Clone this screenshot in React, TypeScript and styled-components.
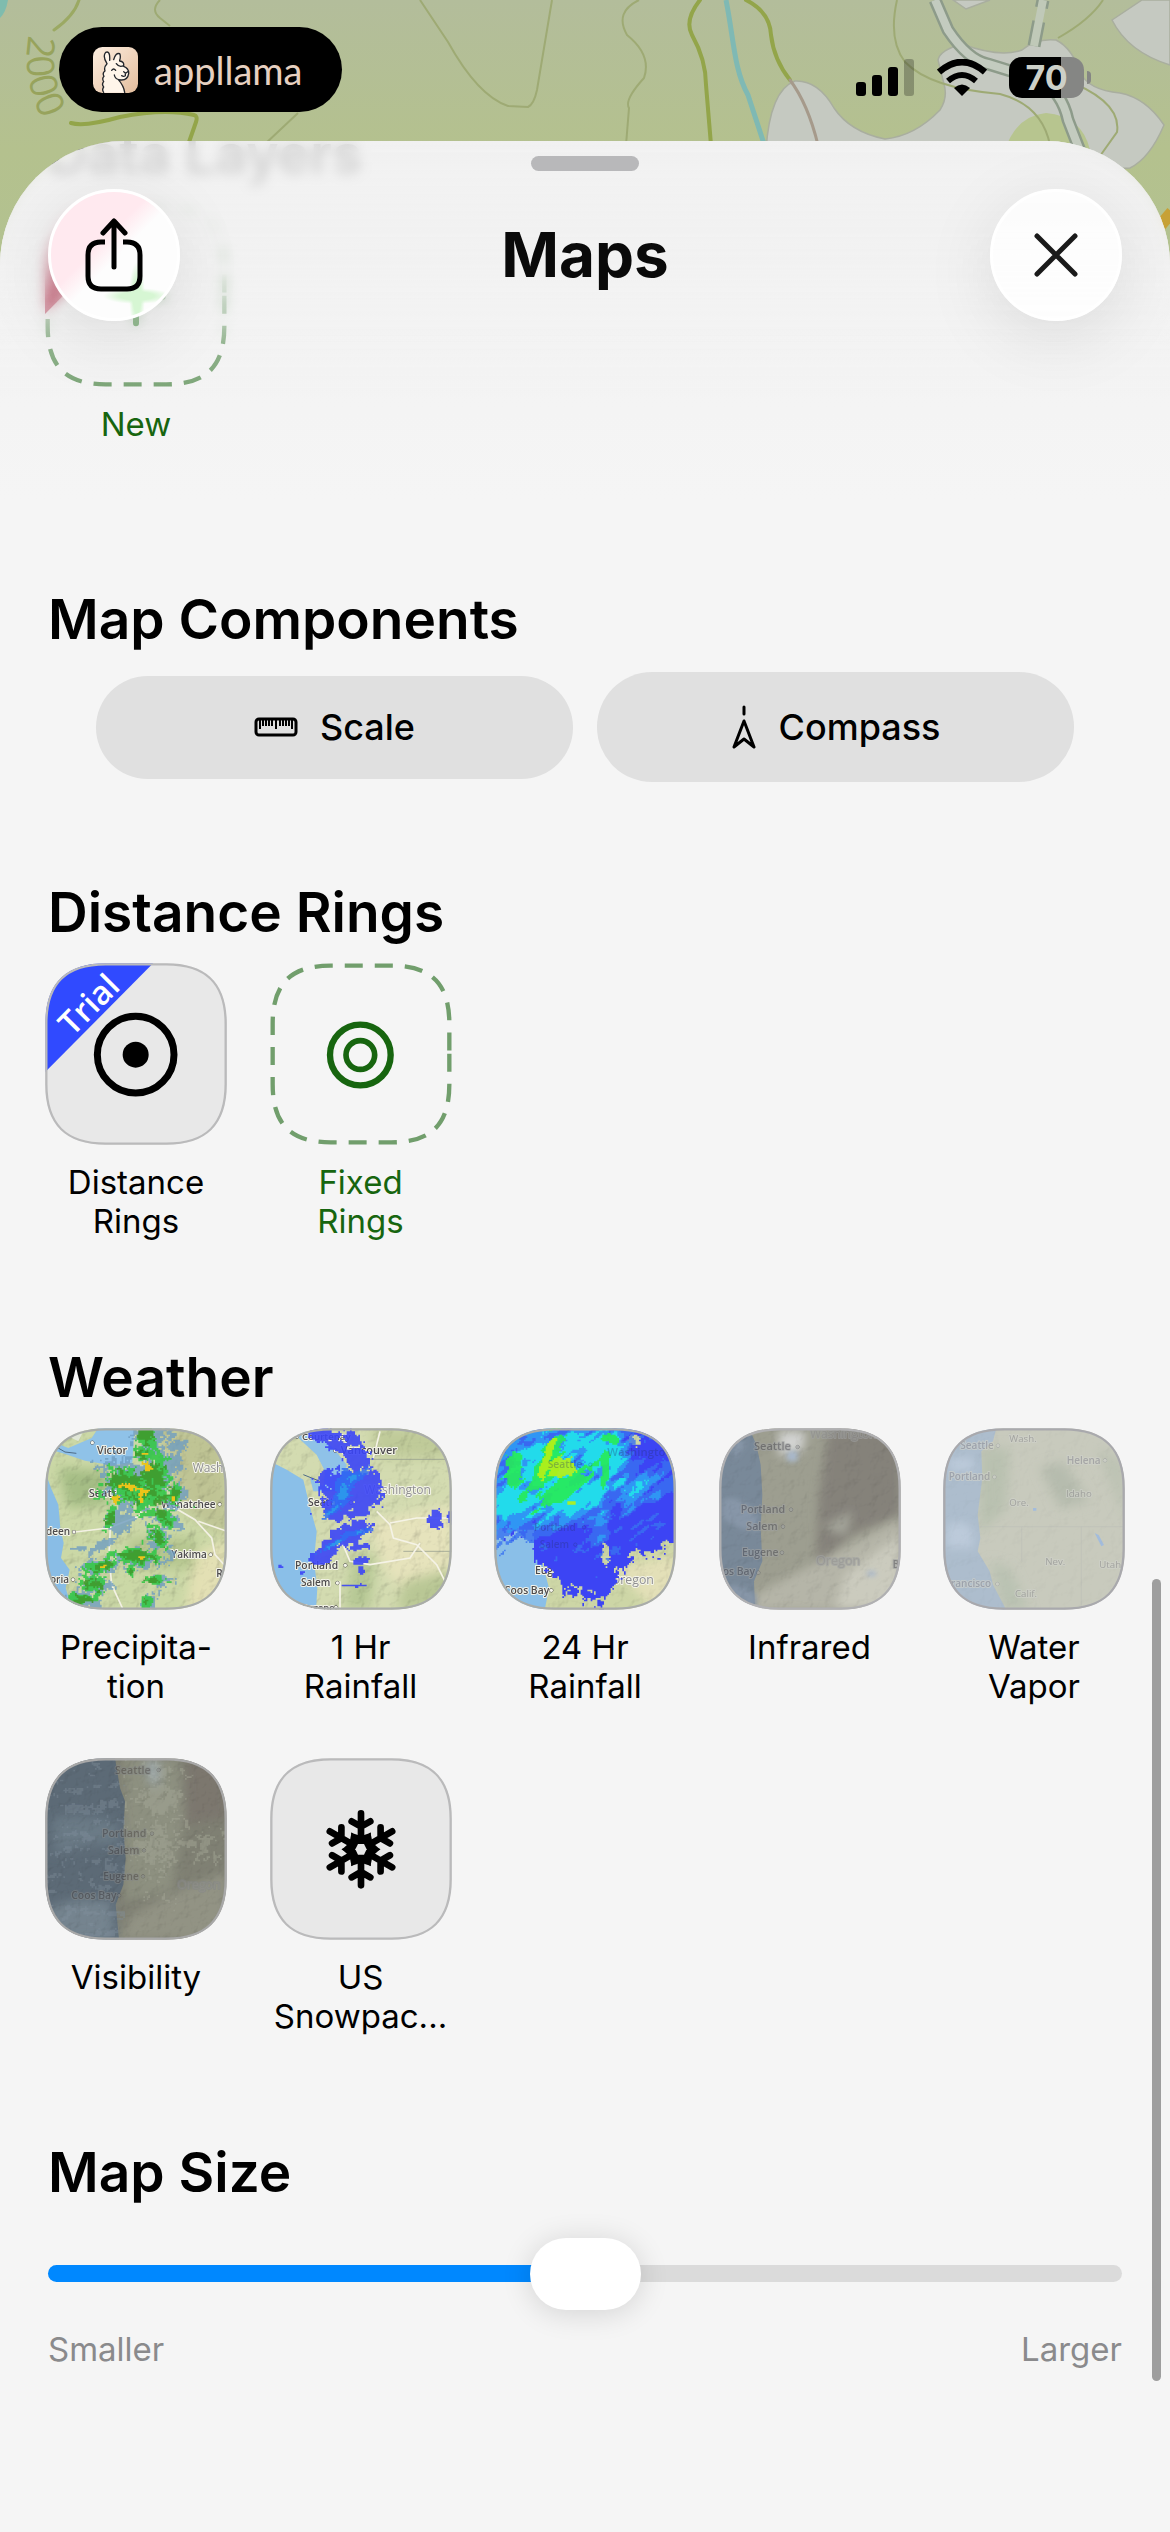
import React, { useId, useState } from "react";
import styled, { createGlobalStyle } from "styled-components";

/* ---------- theme values ---------- */

const font = 'Inter, "Liberation Sans", sans-serif';
const mapFont = '"Open Sans", "Noto Sans", sans-serif';
const green = "#17650f";

/* ---------- layout ---------- */

const GlobalStyle = createGlobalStyle`
  * { box-sizing: border-box; }
  body { margin: 0; background: #f5f5f5; font-family: ${font}; color: #000; }
  button { font: inherit; color: inherit; border: 0; padding: 0; background: none; cursor: pointer; }
  h1, h2, p { margin: 0; }
`;

const Page = styled.div`
  position: relative;
  display: flex;
  flex-direction: column;
  min-height: 100vh;
  overflow: hidden;
`;

const Backdrop = styled.svg`
  position: absolute;
  top: 0;
  left: 0;
  width: 100%;
  height: 300px;
`;

const StatusBar = styled.div`
  position: relative;
  display: flex;
  justify-content: space-between;
  align-items: flex-start;
  height: 141px;
  padding: 27px 79px 0 59px;
`;

const BrandPill = styled.div`
  display: flex;
  align-items: center;
  gap: 16px;
  height: 85px;
  min-width: 283px;
  padding: 0 34px;
  border-radius: 43px;
  background: #000;
  color: #e6d0c0;
  font-family: Lato, ${font};
  font-size: 38px;
  line-height: 40px;
`;

const StatusIcons = styled.div`
  display: flex;
  align-items: center;
  gap: 22px;
  height: 41px;
  margin-top: 30px;
`;

const Battery = styled.div`
  display: flex;
  align-items: center;
  gap: 3px;
`;

const BatteryBody = styled.div`
  width: 75px;
  height: 41px;
  border-radius: 13px;
  background: linear-gradient(90deg, #000 70%, #858684 70%);
  color: #cdd0c8;
  font-size: 34px;
  font-weight: 700;
  line-height: 41px;
  text-align: center;
`;

const BatteryNub = styled.div`
  width: 4px;
  height: 13px;
  border-radius: 0 4px 4px 0;
  background: #858684;
`;

const Sheet = styled.main`
  position: relative;
  flex: 1;
  overflow: hidden;
  border-radius: 124px 124px 0 0;
  background: linear-gradient(#f1f1f1, #f5f5f5 360px);
`;

const Header = styled.header`
  position: absolute;
  top: 0;
  left: 0;
  right: 0;
  display: flex;
  justify-content: space-between;
  align-items: center;
  padding: 48px 48px 78px;

  &::before, &::after {
    content: "";
    position: absolute;
    inset: 0;
    z-index: -1;
  }
  &::before {
    backdrop-filter: blur(6px);
    mask-image: linear-gradient(#000 50%, transparent 80%);
  }
  &::after {
    background: linear-gradient(rgba(241, 241, 241, 0.86), rgba(241, 241, 241, 0.9) 35%, rgba(243, 243, 243, 0.4) 62%, rgba(244, 244, 244, 0.1) 95%, rgba(244, 244, 244, 0));
  }
  z-index: 1;
`;

const Grabber = styled.div`
  position: absolute;
  top: 15px;
  left: 50%;
  width: 108px;
  height: 15px;
  margin-left: -54px;
  border-radius: 8px;
  background: #b8b8ba;
`;

const Title = styled.h1`
  font-size: 62px;
  font-weight: 700;
  line-height: 76px;
  color: #0a0a0a;
`;

const RoundButton = styled.button<{ $tinted?: boolean }>`
  display: grid;
  place-items: center;
  width: 132px;
  height: 132px;
  border: 3px solid #fff;
  border-radius: 50%;
  background: ${(p) =>
    p.$tinted
      ? `radial-gradient(ellipse 34px 8px at 86px 104px, #d6f6d3 50%, transparent),
         radial-gradient(ellipse 8px 34px at 86px 104px, #d6f6d3 50%, transparent),
         linear-gradient(135deg, #ffe9ef 40%, #fdfdfd 52%)`
      : "rgba(254, 254, 254, 0.9)"};
  box-shadow: 0 16px 70px rgba(0, 0, 0, 0.1);
`;

const Scroller = styled.div`
  display: flex;
  flex-direction: column;
  gap: 96px;
  margin-top: -21px;
  padding: 0 45px 96px;
`;

const Section = styled.section`
  display: flex;
  flex-direction: column;
  gap: 17px;
`;

const Heading = styled.h2`
  padding-left: 3px;
  font-size: 55px;
  font-weight: 600;
  line-height: 68px;
`;

const TileGrid = styled.div`
  display: grid;
  grid-template-columns: repeat(auto-fill, 182px);
  justify-content: space-between;
  gap: 52px 40px;
  padding-bottom: 6px;
`;

const TileButton = styled.button<{ $accent?: boolean }>`
  display: flex;
  flex-direction: column;
  align-items: center;
  justify-content: flex-start;
  gap: 18px;
  color: ${(p) => (p.$accent ? green : "#000")};
`;

const TileLabel = styled.span`
  min-height: 78px;
  font-size: 33px;
  line-height: 39px;
  text-align: center;
  white-space: pre-line;
`;

const TileArt = styled.svg`
  display: block;
  width: 182px;
  height: 182px;
`;

const ChipRow = styled.div`
  display: flex;
  align-items: center;
  gap: 24px;
  padding: 2px 51px 0;
`;

const Chip = styled.button`
  flex: 1;
  display: flex;
  align-items: center;
  justify-content: center;
  gap: 22px;
  padding: 33px;
  border-radius: 55px;
  background: #e0e0e0;
  font-size: 36px;
  font-weight: 500;
  line-height: 37px;
`;

const SliderBlock = styled.div`
  display: flex;
  flex-direction: column;
  gap: 7px;
  padding: 0 3px;
`;

const Slider = styled.input`
  appearance: none;
  width: 100%;
  height: 100px;
  margin: 0;
  background: transparent;

  &::-webkit-slider-runnable-track {
    height: 17px;
    border-radius: 9px;
    background: linear-gradient(90deg, #0088ff var(--fill), #dbdbdb var(--fill));
  }
  &::-webkit-slider-thumb {
    appearance: none;
    width: 111px;
    height: 72px;
    margin-top: -27px;
    border-radius: 36px;
    background: #fff;
    box-shadow: 0 3px 30px rgba(0, 0, 0, 0.14);
  }
`;

const SliderEnds = styled.div`
  display: flex;
  justify-content: space-between;
  color: #8a8a8c;
  font-size: 33px;
  line-height: 39px;
`;

const ScrollIndicator = styled.div`
  position: absolute;
  top: 1438px;
  right: 9px;
  width: 9px;
  height: 802px;
  border-radius: 5px;
  background: #9e9e9e;
`;

/* ---------- noise helpers for the radar pictures ---------- */

const hash = (x: number, y: number, s: number) => {
  const n = Math.sin(x * 127.1 + y * 311.7 + s * 74.7) * 43758.5453;
  return n - Math.floor(n);
};

const valueNoise = (x: number, y: number, s: number) => {
  const xi = Math.floor(x);
  const yi = Math.floor(y);
  const u = x - xi;
  const v = y - yi;
  const a = u * u * (3 - 2 * u);
  const b = v * v * (3 - 2 * v);
  const top = hash(xi, yi, s) * (1 - a) + hash(xi + 1, yi, s) * a;
  const low = hash(xi, yi + 1, s) * (1 - a) + hash(xi + 1, yi + 1, s) * a;
  return top * (1 - b) + low * b;
};

const fbm = (x: number, y: number, s: number) =>
  valueNoise(x / 38, y / 38, s) * 0.28 +
  valueNoise(x / 17, y / 17, s + 1) * 0.34 +
  valueNoise(x / 6, y / 6, s + 2) * 0.38;

type Blob = [cx: number, cy: number, rx: number, ry: number, angle?: number];

const blobField = (blobs: Blob[]) => (x: number, y: number) => {
  let best = 0;
  for (const [cx, cy, rx, ry, angle = 0] of blobs) {
    const t = (angle * Math.PI) / 180;
    const dx = x - cx;
    const dy = y - cy;
    const px = (dx * Math.cos(t) + dy * Math.sin(t)) / rx;
    const py = (-dx * Math.sin(t) + dy * Math.cos(t)) / ry;
    best = Math.max(best, Math.exp(-(px * px + py * py) * 0.7));
  }
  return best;
};

/* Path of all square cells in which field plus noise passes the level. */
const cells = (
  field: (x: number, y: number) => number,
  level: number,
  seed: number,
  amount = 1,
  size = 5
) => {
  let d = "";
  for (let y = 0; y < 546; y += size) {
    let start = -1;
    for (let x = 0; x <= 546 + size; x += size) {
      const on = x < 546 && field(x, y) + (fbm(x, y, seed) - 0.5) * amount > level;
      if (on && start < 0) start = x;
      if (!on && start >= 0) {
        d += `M${start} ${y}H${x}v${size}H${start}z`;
        start = -1;
      }
    }
  }
  return d;
};

const rainGreen = blobField([
  [300, 25, 34, 50], [305, 75, 38, 30], [235, 165, 60, 52], [325, 135, 44, 62], [285, 205, 100, 40],
  [388, 195, 26, 32], [355, 268, 40, 22, 45], [195, 265, 18, 42, 20], [335, 325, 42, 28, 40],
  [272, 382, 66, 26], [165, 415, 50, 18, -15], [140, 468, 42, 30], [105, 512, 44, 24],
  [330, 455, 42, 12], [303, 520, 16, 24], [255, 425, 14, 24],
]);
const rainHaze = blobField([
  [320, 35, 60, 64], [240, 160, 80, 70], [340, 140, 66, 84], [400, 55, 34, 24], [225, 275, 48, 40],
  [390, 200, 38, 52], [360, 275, 56, 34, 45], [340, 330, 54, 40, 40], [275, 385, 82, 38],
  [165, 415, 66, 28, -15], [170, 350, 56, 14, -30], [145, 470, 54, 40], [110, 514, 60, 32], [330, 456, 60, 20], [303, 520, 26, 32],
  [100, 360, 26, 6], [380, 100, 44, 34],
]);
const rainHeavy = blobField([
  [300, 118, 24, 20], [262, 180, 50, 16, 15], [214, 208, 14, 24, 30], [283, 200, 12, 24],
  [288, 386, 10, 10], [380, 208, 8, 16], [170, 415, 20, 5, -20], [300, 75, 14, 5],
]);

const hourRain = blobField([
  [150, 18, 40, 22], [245, 32, 40, 26, 20], [200, 50, 30, 20], [258, 95, 40, 40], [225, 160, 72, 44], [215, 195, 60, 50],
  [300, 165, 32, 50], [195, 245, 40, 26], [285, 215, 56, 34, -40], [270, 245, 40, 18, -30],
  [235, 315, 70, 28, -22], [262, 290, 34, 24], [170, 358, 56, 22, -38],
  [150, 392, 28, 16], [262, 357, 28, 8, -10], [270, 396, 26, 12, -10], [272, 425, 8, 14], [492, 275, 20, 26],
  [542, 262, 12, 18], [30, 412, 6, 5], [92, 432, 10, 5], [255, 470, 30, 4],
]);
const hourCore = blobField([
  [218, 180, 26, 60, 20], [250, 145, 44, 14, -35], [190, 240, 40, 10, -40], [255, 312, 44, 8, -10],
  [190, 345, 44, 8, -30],
]);

const dayEdge: [number, number][] = [
  [0, 290], [60, 318], [115, 325], [116, 400], [150, 420], [190, 450], [240, 478], [290, 490], [325, 510],
  [345, 460], [372, 408], [430, 372], [470, 388], [546, 335],
];
const dayMask = (x: number, y: number) => {
  let i = 1;
  while (i < dayEdge.length - 1 && dayEdge[i][0] < x) i += 1;
  const [x0, y0] = dayEdge[i - 1];
  const [x1, y1] = dayEdge[i];
  const limit = y0 + ((x - x0) / (x1 - x0)) * (y1 - y0);
  const hole = Math.exp(-(((x - 332) / 12) ** 2) - ((y - 378) / 30) ** 2);
  const corner = x + y < 90 ? 0.8 : 0;
  const dry = Math.exp(-(((x - 420) / 26) ** 2) - ((y - 30) / 26) ** 2) * 0.9;
  const spots = y > limit && x > 200 && x < 420 ? 0.2 : 0;
  return Math.min((limit - y) / 90, 0.5) + 0.5 - hole * 1.3 - corner - dry + spots;
};
const streak = (x: number, y: number) =>
  (valueNoise((x - y) / 70 + 20, (y + x * 0.8) / 15 + 50, 9) - 0.5) * 0.5;
const bump = (x: number, y: number, cx: number, cy: number, rx: number, ry: number) =>
  Math.exp(-(((x - cx) / rx) ** 2) - ((y - cy) / ry) ** 2);
const dayCloud = blobField([
  [160, 120, 150, 130, -40], [70, 220, 130, 70, -30], [310, 70, 80, 90], [230, 210, 140, 60, -30],
]);
const dayHeat = (x: number, y: number) =>
  dayCloud(x, y) + streak(x, y) + 0.34 * bump(x, y, 410, 190, 60, 70) + 0.4 * bump(x, y, 318, 290, 26, 70) +
  0.34 * bump(x, y, 490, 170, 120, 80) + 0.26 * bump(x, y, 290, 350, 60, 60) + 0.2 * bump(x, y, 430, 300, 80, 50);
const dayRain = blobField([
  [165, 90, 34, 120, 18], [215, 175, 110, 34, -35], [120, 170, 60, 24, -40], [345, 30, 30, 18, 20],
  [330, 120, 14, 60], [60, 120, 30, 50],
]);
const dayWarm = (x: number, y: number) => dayRain(x, y) + streak(x, y);
const dayPeak = blobField([[200, 115, 60, 36, 10], [160, 80, 16, 100, 18], [228, 222, 20, 6]]);
const dayHot = (x: number, y: number) => dayPeak(x, y) + streak(x, y) * 0.8;

const paths = {
  haze: cells(rainHaze, 0.64, 3, 1.5),
  green: cells(rainGreen, 0.6, 7, 1.5),
  deep: cells(rainGreen, 0.84, 11, 1.3),
  heavy: cells(rainHeavy, 0.72, 15, 1.4),
  hour: cells(hourRain, 0.5, 21, 1.1),
  hourMid: cells(hourCore, 0.5, 24, 0.9),
  hourCore: cells(hourCore, 0.85, 25, 0.8),
  day: cells(dayMask, 0.5, 31, 1.1),
  dayA: cells(dayHeat, 0.32, 33, 0.4),
  dayB: cells(dayHeat, 0.54, 34, 0.4),
  dayC: cells(dayHeat, 0.74, 35, 0.4),
  dayD: cells(dayWarm, 0.6, 36, 0.5),
  dayE: cells(dayHot, 0.68, 37, 0.5),
  swell: cells((x, y) => valueNoise((x + y) / 60, y / 16, 5) * 0.6 + (x < 240 ? 0 : -2), 0.45, 41, 1),
  scrub: cells((x, y) => Math.max(bump(x, y, 330, 180, 110, 230), 0.9 * bump(x, y, 480, 260, 70, 80)) * 0.6, 0.5, 43, 1.2),
};

/* ---------- tile art ---------- */

/* Continuous-corner square, walked clockwise from the middle of the right side. */
const squircle = (inset: number) => {
  const a = inset;
  const b = 546 - inset;
  const k = 62;
  const e = 182;
  return `M${b} 272V${546 - e}C${b} ${546 - k} ${546 - k} ${b} ${546 - e} ${b}H${e}C${k} ${b} ${a} ${546 - k} ${a} ${546 - e}V${e}C${a} ${k} ${k} ${a} ${e} ${a}H${546 - e}C${546 - k} ${a} ${b} ${k} ${b} ${e}z`;
};

function Framed({ children, edge = "#bababb" }: { children: React.ReactNode; edge?: string }) {
  const id = useId();
  return (
    <TileArt viewBox="0 0 546 546" aria-hidden="true">
      <clipPath id={id}>
        <path d={squircle(1)} />
      </clipPath>
      <g clipPath={`url(#${id})`}>{children}</g>
      <path d={squircle(4)} fill="none" stroke={edge} strokeWidth="7" />
    </TileArt>
  );
}

function Dashed({ children }: { children: React.ReactNode }) {
  return (
    <TileArt viewBox="0 0 546 546" aria-hidden="true">
      <path d={squircle(8)} fill="none" stroke="#719e6c" strokeWidth="13" strokeDasharray="54 36" />
      {children}
    </TileArt>
  );
}

type Place = [text: string, x: number, y: number, size: number, dotX?: number, dotY?: number];

function Places({ items, ink, halo, opacity = 1, light = [] }: {
  items: Place[]; ink: string; halo: string; opacity?: number; light?: string[];
}) {
  return (
    <g opacity={opacity} fontFamily={mapFont} fontWeight="600" paintOrder="stroke" strokeLinejoin="round">
      {items.map(([text, x, y, size, dx, dy]) => (
        <g key={text}>
          <text x={x} y={y} fontSize={size} fontWeight={light.includes(text) ? 400 : 600}
            fill={light.includes(text) ? "#8f8f90" : ink} stroke={halo} strokeWidth="6">
            {text}
          </text>
          {dx !== undefined && <circle cx={dx} cy={dy} r="5" fill={halo} stroke={ink} strokeWidth="3" />}
        </g>
      ))}
    </g>
  );
}

function Relief({ strength = 0.5, frequency = 0.025 }: { strength?: number; frequency?: number }) {
  const id = useId();
  return (
    <>
      <filter id={id} x="0" y="0" width="100%" height="100%">
        <feTurbulence type="fractalNoise" baseFrequency={frequency} numOctaves={4} seed={4} />
        <feDiffuseLighting surfaceScale="9" diffuseConstant="1.3" lightingColor="#fff">
          <feDistantLight azimuth={225} elevation={50} />
        </feDiffuseLighting>
      </filter>
      <rect width="546" height="546" filter={`url(#${id})`} opacity={strength} style={{ mixBlendMode: "multiply" }} />
    </>
  );
}

function Soft({ by, children }: { by: number; children: React.ReactNode }) {
  const id = useId();
  return (
    <>
      <filter id={id} x="-30%" y="-30%" width="160%" height="160%">
        <feGaussianBlur stdDeviation={by} />
      </filter>
      <g filter={`url(#${id})`}>{children}</g>
    </>
  );
}

const NewLayerArt = () => (
  <TileArt viewBox="0 0 546 546" aria-hidden="true">
    <path d={squircle(8)} fill="none" stroke="#719e6c" strokeWidth="13" strokeDasharray="54 36" />
    <path d="M0 182C0 62 62 0 182 0H323L0 327z" fill="#b0213f" />
    <path d="M273 195v160M193 275h160" stroke="#3f8a3a" strokeWidth="18" strokeLinecap="round" />
  </TileArt>
);

const DistanceArt = () => (
  <Framed>
    <rect width="546" height="546" fill="#e8e8e8" />
    <circle cx="272" cy="275" r="115" fill="none" stroke="#000" strokeWidth="21" />
    <circle cx="272" cy="275" r="39" />
    <path d="M0 0H325L0 328z" fill="#304aff" />
    <text transform="translate(156 149) rotate(-45)" textAnchor="middle" fill="#fff" fontFamily={mapFont} fontSize="98" fontWeight="600">
      Trial
    </text>
  </Framed>
);

const FixedArt = () => (
  <Dashed>
    <circle cx="271" cy="276" r="91" fill="none" stroke={green} strokeWidth="19" />
    <circle cx="271" cy="276" r="43" fill="none" stroke={green} strokeWidth="17" />
  </Dashed>
);

const PrecipitationArt = () => (
  <Framed edge="#a9aca9">
    <rect width="546" height="546" fill="#cbd8a6" />
    <Soft by={16}>
      <path d="M420 546L450 380L546 330V546z" fill="#e3e0b4" />
      <path d="M330 0H546V330L420 250z" fill="#bfc494" />
      <path d="M40 120L200 130L190 230L70 240z" fill="#a5bd85" />
      <path d="M250 330h200v90H250z" fill="#b5c68f" />
    </Soft>
    <Relief strength={0.4} />
    <path d="M0 130L18 180L40 230L46 300L56 345L48 390L74 425L62 480L82 546H0z" fill="#89bde6" />
    <path d="M8 62L60 78L120 98L200 112L262 104L268 0H160L140 30L70 60L30 44z" fill="#8fc2e8" />
    <path d="M0 0H120L100 40L60 20L20 50L0 40z" fill="#dfe6d6" />
    <path d="M36 58L60 72L94 76" fill="none" stroke="#4e6b86" strokeWidth="3" />
    <g fill="none" stroke="#f3f1e4" strokeWidth="5">
      <path d="M90 312L190 300L290 262L280 230" />
      <path d="M196 300L192 380L200 470L235 546" />
      <path d="M390 240L450 275L500 330L510 380L546 420" />
      <path d="M460 280L546 310" />
    </g>
    <Places ink="#4c4a4c" halo="#f4f4ea" light={["Wash"]} items={[
      ["Victor", 156, 79, 32, 142, 44], ["Wash", 443, 131, 36], ["Seattle", 131, 208, 33],
      ["Wenatchee", 349, 240, 30, 524, 229], ["deen", 3, 321, 30, 87, 312], ["Yakima", 379, 390, 30, 497, 380],
      ["oria", 15, 464, 30, 84, 455], ["R", 514, 448, 30],
    ]} />
    <path d={paths.haze} fill="#6f9ec0" opacity=".8" />
    <path d={paths.green} fill="#38c84a" opacity=".92" />
    <path d={paths.deep} fill="#3f9a2e" opacity=".9" />
    <path d={paths.heavy} fill="#ecc419" />
  </Framed>
);

const HourArt = () => (
  <Framed edge="#a9aca9">
    <rect width="546" height="546" fill="#d3dbb0" />
    <Soft by={18}>
      <path d="M300 280L546 230V430L400 500L330 400z" fill="#e6e3bc" />
      <path d="M250 380h70l-20 166h-80z" fill="#b6c894" />
      <path d="M300 0H546V90H330z" fill="#bfca99" />
      <path d="M400 460L546 420V546H380z" fill="#b9c795" />
    </Soft>
    <Relief strength={0.36} />
    <path d="M0 100L50 125L100 155L118 230L140 310L132 400L142 480L138 546H0z" fill="#8abfe8" />
    <path d="M60 8L96 40L140 80L165 130L160 175L120 150L130 190L205 190L230 110L190 60L130 10z" fill="#8fc2e8" />
    <path d="M100 140L150 160" fill="none" stroke="#4e6b86" strokeWidth="3" />
    <path d="M285 94H546M400 370H546" fill="none" stroke="#8b9486" strokeWidth="2" />
    <g fill="none" stroke="#f5f3e6" strokeWidth="5">
      <path d="M320 250L360 290L370 330L440 350L500 410L530 470" />
      <path d="M215 340L240 400L300 410L420 390L450 345" />
      <path d="M360 285L440 270H546" />
      <path d="M210 460V546M330 10L310 90" />
    </g>
    <Places ink="#4c4a4c" halo="#f4f4ea" light={["Washington"]} items={[
      ["Courtenay", 96, 37, 29, 81, 26], ["Vancouver", 212, 79, 33, 196, 68], ["Washington", 283, 197, 36],
      ["Seattle", 114, 234, 31, 243, 224], ["Portland", 75, 424, 31, 226, 412], ["Salem", 93, 474, 30, 202, 465],
      ["Eugene", 95, 550, 28, 198, 538],
    ]} />
    <path d={paths.hour} fill="#3b45f6" opacity=".9" />
    <path d={paths.hourMid} fill="#2f6ff2" opacity=".85" />
    <path d={paths.hourCore} fill="#2ba0ea" opacity=".8" />
  </Framed>
);

const DayArt = () => (
  <Framed edge="#a9aca9">
    <rect width="546" height="546" fill="#cdd6a6" />
    <Soft by={14}>
      <path d="M360 420L546 380V546H480z" fill="#e3e0b8" />
    </Soft>
    <Relief strength={0.3} />
    <path d="M0 0H120L125 330L165 480L152 546H0z" fill="#8abfe8" />
    <path d="M480 546L510 480L546 470V546z" fill="#9fcbe2" />
    <Places ink="#4c4a4c" halo="#f4f4ea" light={["Oregon"]} items={[
      ["Oregon", 350, 467, 37], ["Coos Bay", 30, 498, 31, 172, 487], ["Eugene", 123, 437, 31, 240, 427],
    ]} />
    <path d={paths.day} fill="#3c44f4" />
    <Soft by={2}>
      <path d={paths.dayA} fill="#3a72f0" opacity=".8" />
      <path d={paths.dayB} fill="#2e9ff5" opacity=".85" />
      <path d={paths.dayC} fill="#22e2ea" opacity=".9" />
      <path d={paths.dayD} fill="#27ea58" opacity=".9" />
      <path d={paths.dayE} fill="#b8f014" opacity=".9" />
    </Soft>
    <Places opacity={0.3} ink="#23306a" halo="transparent" items={[
      ["Washington", 340, 84, 34], ["Seattle", 161, 119, 31, 289, 110], ["Portland", 120, 309, 30, 270, 298],
      ["Salem", 137, 361, 30, 244, 350],
    ]} />
  </Framed>
);

const InfraredArt = () => (
  <Framed edge="#b0b0b2">
    <rect width="546" height="546" fill="#9d9e90" />
    <Soft by={14}>
      <path d="M330 0H546V260L400 320L290 420L300 200z" fill="#85827a" />
      <path d="M110 500L300 400L546 270V546H90z" fill="#b5b5a8" />
      <path d="M380 440L546 320V546H350z" fill="#cbcbbe" />
      <path d="M180 10h80l-10 60l-70 15z" fill="#d2d3d1" />
      <path d="M310 300l90-50l-20 70z" fill="#a5a69b" />
    </Soft>
    <path d="M0 0H90L112 50L125 110L130 200L125 300L130 400L105 460L108 546H0z" fill="#798999" />
    <Soft by={8}>
      <path d="M10 220q30-30 100 30l10 60q-60 0-110-40zM30 470q40 0 80 30v40H40zM20 30q40-10 60 20l-30 40z" fill="#8796a8" />
      <path d="M445 430h25v14h-25z" fill="#a8b8cc" />
      <path d="M205 70h30v30h-30z" fill="#a8b8cc" />
    </Soft>
    <Relief strength={0.2} />
    <Places opacity={0.6} ink="#55555c" halo="#a0a2a2" light={["Washington", "Oregon"]} items={[
      ["Washington", 273, 30, 36], ["Seattle", 105, 67, 33, 236, 57], ["Portland", 65, 256, 32, 216, 245],
      ["Salem", 82, 307, 32, 192, 296], ["Eugene", 69, 384, 31, 189, 374], ["os Bay", 11, 442, 31, 118, 434],
      ["Oregon", 291, 412, 38], ["B", 521, 420, 30],
    ]} />
  </Framed>
);

const VaporArt = () => (
  <Framed edge="#a9a9ad">
    <rect width="546" height="546" fill="#c8cabd" />
    <Soft by={16}>
      <path d="M110 60h90l-10 180l-80 80z" fill="#b9c1b0" />
      <path d="M290 120l70-20l80 120l-90 20z" fill="#b6bcae" />
      <path d="M140 400l60 20l60 126h-80z" fill="#bac2b2" />
      <path d="M460 60l86 40v180z" fill="#bdc3b4" />
    </Soft>
    <path d="M0 0H160L150 40L115 70L118 150L104 260L112 330L104 370L140 430L150 470L190 546H0z" fill="#adbdcd" />
    <Soft by={12}>
      <path d="M10 300q40-40 80 10v50H10zM20 90h70v40H20z" fill="#bccada" />
    </Soft>
    <path d="M455 315l12 6l16 30l-8 4zM270 240h10v8h-10z" fill="#a3bcdc" />
    <path d="M110 296H546M236 296V400M415 296V546" stroke="#bdbfb8" strokeWidth="2" fill="none" />
    <Relief strength={0.08} />
    <Places opacity={0.65} ink="#94949b" halo="#d0d2cb" light={["Wash.", "Ore.", "Idaho", "Nev.", "Utah", "Calif."]} items={[
      ["Seattle", 52, 63, 30, 165, 53], ["Wash.", 199, 42, 29], ["Helena", 371, 107, 30, 486, 97],
      ["Portland", 17, 157, 30, 154, 147], ["Ore.", 199, 233, 29], ["Idaho", 369, 206, 29], ["Nev.", 307, 410, 29],
      ["Utah", 469, 420, 29], ["rancisco", 24, 478, 30, 163, 468], ["Calif.", 216, 506, 29],
    ]} />
  </Framed>
);

const VisibilityArt = () => (
  <Framed edge="#a8a8a8">
    <rect width="546" height="546" fill="#7f8073" />
    <Soft by={14}>
      <path d="M235 0H400L420 160L380 400L240 430z" fill="#8d9080" />
      <path d="M420 0H546V180L420 200z" fill="#7b776e" />
      <path d="M260 470L420 390L546 340V546H220z" fill="#929384" />
    </Soft>
    <path d={paths.scrub} fill="#a3a695" opacity=".5" />
    <path d="M0 0H210L225 90L240 130L235 220L242 300L235 380L212 440L222 546H0z" fill="#5c6a76" />
    <Soft by={16}>
      <path d="M0 460q80-50 200-30l10 116H0z" fill="#75848f" />
      <path d="M20 180q100-20 200 20v60q-100-10-190 30z" fill="#6b7a86" />
      <path d="M300 10h40v70h-20z" fill="#a3afb5" />
    </Soft>
    <path d={paths.swell} fill="#8492a0" opacity=".35" />
    <Relief strength={0.16} frequency={0.04} />
    <Places opacity={0.5} ink="#4b4646" halo="#858888" light={["Oregon"]} items={[
      ["Seattle", 210, 48, 32, 341, 36], ["Portland", 171, 237, 32, 321, 227], ["Salem", 189, 287, 32, 297, 277],
      ["Eugene", 175, 365, 30, 294, 355], ["Coos Bay", 79, 424, 31, 222, 412], ["Oregon", 397, 392, 37],
    ]} />
  </Framed>
);

const SnowArt = () => (
  <Framed>
    <rect width="546" height="546" fill="#e8e8e8" />
    <g transform="translate(273 274)">
      {[0, 60, 120, 180, 240, 300].map((turn) => (
        <g key={turn} transform={`rotate(${turn})`}>
          <path d="M0-30V-108M-28-84L0-68L28-84" fill="none" stroke="#000" strokeWidth="20" strokeLinecap="round" strokeLinejoin="round" />
          <path d="M-22-12L-30-50L0-40L30-50L22-12z" />
        </g>
      ))}
      <circle r="30" fill="none" stroke="#000" strokeWidth="20" />
      <path d="M-17 0L-9-16H9L17 0L9 16H-9z" fill="#e8e8e8" />
    </g>
  </Framed>
);

/* ---------- icons ---------- */

const ShareIcon = () => (
  <svg width="58" height="74" viewBox="0 0 58 74" fill="none" stroke="#000" strokeWidth="5" strokeLinecap="round" strokeLinejoin="round" aria-hidden="true">
    <path d="M20 24H16Q3 24 3 37V58Q3 71 16 71H42Q55 71 55 58V37Q55 24 42 24H38" strokeLinecap="butt" />
    <path d="M29 49V4M18 15L29 3L40 15" />
  </svg>
);

const CloseIcon = () => (
  <svg width="44" height="44" viewBox="0 0 44 44" fill="none" stroke="#1a1a1a" strokeWidth="5" strokeLinecap="round" aria-hidden="true">
    <path d="M3 3L41 41M41 3L3 41" />
  </svg>
);

const RulerIcon = () => (
  <svg width="44" height="20" viewBox="0 0 44 20" fill="none" stroke="#000" strokeWidth="3" aria-hidden="true">
    <rect x="2" y="2" width="40" height="16" rx="3" />
    <path d="M6 3v9M22 3v9M38 3v9" strokeWidth="2" />
    <path d="M9 3v6M12 3v6M15 3v6M18 3v6M26 3v6M29 3v6M32 3v6M35 3v6" strokeWidth="2" />
  </svg>
);

const NeedleIcon = () => (
  <svg width="26" height="44" viewBox="0 0 26 44" fill="none" stroke="#000" strokeWidth="3" strokeLinejoin="round" strokeLinecap="round" aria-hidden="true">
    <path d="M13 2V9M13 16L23 42L13 34L3 42z" />
  </svg>
);

const SignalIcon = () => (
  <svg width="59" height="37" viewBox="0 0 59 37" aria-hidden="true">
    <rect x="0" y="23" width="10" height="14" rx="3" />
    <rect x="16" y="16" width="10" height="21" rx="3" />
    <rect x="32" y="8" width="10" height="29" rx="3" />
    <rect x="48" y="0" width="10" height="37" rx="3" opacity=".25" />
  </svg>
);

const WifiIcon = () => (
  <svg width="50" height="37" viewBox="0 0 50 37" aria-hidden="true">
    <path d="M25 37L17 29Q25 22 33 29z" />
    <path d="M11 22Q25 10 39 22" fill="none" stroke="#000" strokeWidth="6" />
    <path d="M2 13Q25-7 48 13" fill="none" stroke="#000" strokeWidth="6.5" />
  </svg>
);

const LlamaIcon = () => (
  <svg width="45" height="46" viewBox="0 0 135 138" aria-hidden="true">
    <defs>
      <linearGradient id="peach" x1="0" y1="0" x2="1" y2="1">
        <stop offset="0" stopColor="#fdeee0" />
        <stop offset="1" stopColor="#e3bd9d" />
      </linearGradient>
    </defs>
    <rect width="135" height="138" rx="28" fill="url(#peach)" />
    <path d="M30 137Q26 120 32 108Q26 98 33 88Q28 76 36 70Q30 56 42 48Q28 28 38 16Q52 12 52 40L64 38Q68 18 80 20Q86 30 80 42Q94 42 90 54Q106 62 107 78Q108 94 92 98Q82 102 78 98Q90 120 95 137z" fill="#fff5ea" />
    <g fill="none" stroke="#22252b" strokeWidth="4" strokeLinecap="round" strokeLinejoin="round">
      <path d="M32 136Q26 128 32 120Q25 112 32 104Q26 94 33 88Q27 78 36 72Q32 60 42 50Q28 28 38 16Q52 10 50 40" />
      <path d="M62 38Q68 16 80 20Q84 28 80 40M80 42Q94 44 92 56Q78 62 70 50M92 58Q108 64 107 80Q104 100 84 99Q66 98 64 84M76 98Q92 116 95 136" />
      <path d="M56 70Q62 62 68 70M92 74Q98 82 104 74M97 80V86Q92 90 86 86" />
    </g>
  </svg>
);

/* ---------- topographic map behind the sheet ---------- */

const TopoMap = () => (
  <Backdrop viewBox="0 0 1170 300" preserveAspectRatio="xMidYMin slice" aria-hidden="true">
    <defs>
      <linearGradient id="meadow" x1="0" y1="0" x2="0" y2="1">
        <stop offset="0" stopColor="#b3bd9b" />
        <stop offset=".5" stopColor="#b4c18e" />
        <stop offset="1" stopColor="#b2c290" />
      </linearGradient>
    </defs>
    <rect width="1170" height="300" fill="url(#meadow)" />
    <path d="M0 0H8Q6 12 0 18z" fill="#7fbcae" />
    <g fill="#c5c9c1" stroke="#a9ae9f" strokeWidth="1.5">
      <path d="M766 150Q770 90 795 81Q818 80 834 108Q850 132 885 139Q915 136 940 110Q948 98 944 84L938 60Q940 50 962 44Q1000 58 1022 50Q1036 38 1056 40Q1072 48 1080 72Q1088 90 1120 93Q1146 98 1164 125Q1150 158 1130 168L1090 170z" />
      <path d="M1112 20L1142 0H1170V65Q1128 52 1112 20z" />
      <path d="M953 0L966 9L990 0z" />
    </g>
    <path d="M1005 150Q1016 116 1046 113Q1082 116 1090 150z" fill="#b7c58f" />
    <g fill="none" stroke="#9eaa74" strokeWidth="2">
      <path d="M160 0Q150 10 160 18L170 26M298 113L264 145M420 0L448 42Q478 96 508 106L528 107Q534 104 537 90L552 0" />
      <path d="M639 0Q614 12 627 35Q652 55 644 78Q624 100 629 108L626 145M897 0Q888 40 905 62Q930 88 1000 94Q1042 105 1050 145M1103 0Q1090 20 1058 38M1060 78Q1122 100 1117 132L1100 156" />
    </g>
    <g fill="none" stroke="#93a54a" strokeWidth="4" strokeLinecap="round">
      <path d="M79 0Q74 16 54 30" stroke="#9ba963" strokeWidth="3" />
      <path d="M71 123Q85 127 120 117Q165 108 194 115Q198 116 196 122L188 145M700 0Q684 20 692 35Q706 60 706 85L711 145M746 0Q770 12 771 35Q774 60 790 80" />
      <path d="M790 80Q808 104 818 145" stroke="#a69a8b" strokeWidth="3" />
    </g>
    <path d="M726 0C734 40 734 70 748 95L766 150" fill="none" stroke="#7fb9b4" strokeWidth="5" />
    <path d="M935 0L948 30Q968 60 988 64L1040 80Q1062 92 1068 120L1082 156" fill="none" stroke="#8d9b8a" strokeWidth="13" />
    <path d="M935 0L948 30Q968 60 988 64L1040 80Q1062 92 1068 120L1082 156" fill="none" stroke="#c3cbbf" strokeWidth="8" />
    <path d="M1043 0L1034 46" fill="none" stroke="#8d9b8a" strokeWidth="13" strokeDasharray="8 14 26 14" />
    <path d="M1043 0L1034 46" fill="none" stroke="#c0c9b8" strokeWidth="8" />
    <path d="M1160 226L1172 212" stroke="#c7a136" strokeWidth="12" />
    <path id="contour" d="M29 35C23 66 29 98 48 130" fill="none" />
    <text fontFamily={mapFont} fontSize="38" fill="#97a35c">
      <textPath href="#contour">2000</textPath>
    </text>
  </Backdrop>
);

/* ---------- screen ---------- */

type TileSpec = { label: string; art: React.ReactNode };

const weather: TileSpec[] = [
  { label: "Precipita-\ntion", art: <PrecipitationArt /> },
  { label: "1 Hr\nRainfall", art: <HourArt /> },
  { label: "24 Hr\nRainfall", art: <DayArt /> },
  { label: "Infrared", art: <InfraredArt /> },
  { label: "Water\nVapor", art: <VaporArt /> },
  { label: "Visibility", art: <VisibilityArt /> },
  { label: "US\nSnowpac...", art: <SnowArt /> },
];

function Tile({ label, art, accent }: TileSpec & { accent?: boolean }) {
  return (
    <TileButton type="button" $accent={accent}>
      {art}
      <TileLabel>{label}</TileLabel>
    </TileButton>
  );
}

export default function App() {
  const [size, setSize] = useState(50);
  return (
    <Page>
      <GlobalStyle />
      <TopoMap />
      <StatusBar>
        <BrandPill>
          <LlamaIcon />
          appllama
        </BrandPill>
        <StatusIcons>
          <SignalIcon />
          <WifiIcon />
          <Battery>
            <BatteryBody>70</BatteryBody>
            <BatteryNub />
          </Battery>
        </StatusIcons>
      </StatusBar>
      <Sheet>
        <Header>
          <Grabber />
          <RoundButton type="button" aria-label="Share" $tinted><ShareIcon /></RoundButton>
          <Title>Maps</Title>
          <RoundButton type="button" aria-label="Close"><CloseIcon /></RoundButton>
        </Header>
        <Scroller>
          <Section>
            <Heading>Data Layers</Heading>
            <TileGrid>
              <Tile label="New" art={<NewLayerArt />} accent />
            </TileGrid>
          </Section>
          <Section>
            <Heading>Map Components</Heading>
            <ChipRow>
              <Chip type="button"><RulerIcon />Scale</Chip>
              <Chip type="button"><NeedleIcon />Compass</Chip>
            </ChipRow>
          </Section>
          <Section>
            <Heading>Distance Rings</Heading>
            <TileGrid>
              <Tile label={"Distance\nRings"} art={<DistanceArt />} />
              <Tile label={"Fixed\nRings"} art={<FixedArt />} accent />
            </TileGrid>
          </Section>
          <Section>
            <Heading>Weather</Heading>
            <TileGrid>
              {weather.map((t) => <Tile key={t.label} {...t} />)}
            </TileGrid>
          </Section>
          <Section>
            <Heading as="label" htmlFor="map-size">Map Size</Heading>
            <SliderBlock>
              <Slider
                id="map-size"
                type="range"
                min={0}
                max={100}
                value={size}
                onChange={(e) => setSize(Number(e.target.value))}
                style={{ "--fill": `${size}%` } as React.CSSProperties}
              />
              <SliderEnds><span>Smaller</span><span>Larger</span></SliderEnds>
            </SliderBlock>
          </Section>
        </Scroller>
        <ScrollIndicator />
      </Sheet>
    </Page>
  );
}
